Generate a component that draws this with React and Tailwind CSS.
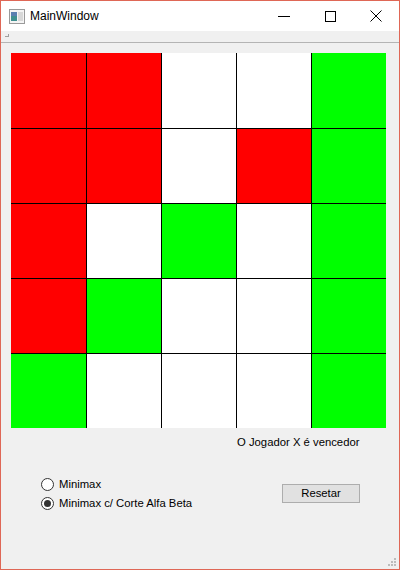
import React, { useState } from 'react';

const R = 'bg-[#ff0000]';
const G = 'bg-[#00ff00]';
const W = 'bg-white';

const board = [
    [R, R, W, W, G],
    [R, R, W, R, G],
    [R, W, G, W, G],
    [R, G, W, W, G],
    [G, W, W, W, G],
];

const Radio = ({ checked, label, onClick }) => (
    <div className="flex items-center h-[19px] cursor-default" onClick={onClick}>
        <span className="w-[13px] h-[13px] rounded-full border border-[#333333] bg-white flex items-center justify-center">
            {checked && <span className="w-[7px] h-[7px] rounded-full bg-[#333333]" />}
        </span>
        <span className="ml-[5px] text-[11.3px] text-black">{label}</span>
    </div>
);

const App = () => {
    const [mode, setMode] = useState(1);

    return (
        <div
            className="w-[400px] h-[570px] border border-[#df6756] bg-[#f0f0f0] flex flex-col relative overflow-hidden"
            style={{ fontFamily: '"Liberation Sans", Arial, sans-serif' }}
        >
            {/* title bar */}
            <div className="h-[30px] bg-white flex items-center shrink-0">
                <svg className="ml-[8px]" width="16" height="15" viewBox="0 0 16 15">
                    <rect x="0.5" y="0.5" width="15" height="14" fill="#f4f4f4" stroke="#9a9a9a" />
                    <rect x="2" y="3" width="6" height="9" fill="#3f8f8f" />
                    <rect x="2" y="3" width="6" height="4" fill="#5a7fb0" />
                    <rect x="9" y="3" width="5" height="9" fill="#d8d8d8" />
                </svg>
                <span className="ml-[5px] text-[12px] text-black">MainWindow</span>
                <div className="ml-auto flex items-center">
                    <div className="w-[46px] h-[30px] flex items-center justify-center">
                        <svg width="12" height="12" viewBox="0 0 12 12">
                            <line x1="0" y1="6.5" x2="12" y2="6.5" stroke="#000" strokeWidth="1" />
                        </svg>
                    </div>
                    <div className="w-[46px] h-[30px] flex items-center justify-center">
                        <svg width="11" height="11" viewBox="0 0 11 11">
                            <rect x="0.5" y="0.5" width="10" height="10" fill="none" stroke="#000" strokeWidth="1" />
                        </svg>
                    </div>
                    <div className="w-[46px] h-[30px] flex items-center justify-center">
                        <svg width="12" height="12" viewBox="0 0 12 12">
                            <path d="M0.5 0.5 L11.5 11.5 M11.5 0.5 L0.5 11.5" stroke="#000" strokeWidth="1" />
                        </svg>
                    </div>
                </div>
            </div>

            {/* menu strip */}
            <div className="h-[12px] shrink-0 border-b border-[#b4b4b4] flex items-start">
                <svg className="ml-[4px] mt-[3px]" width="4" height="3" viewBox="0 0 4 3">
                    <rect x="0" y="2" width="4" height="1" fill="#a0a0a0" />
                    <rect x="3" y="0" width="1" height="3" fill="#a0a0a0" />
                </svg>
            </div>

            {/* content */}
            <div className="pl-[10px] pt-[10px] flex flex-col">
                <div className="grid grid-cols-[75px_74px_74px_74px_74px] grid-rows-[75px_74px_74px_74px_74px] gap-px bg-black w-[375px] h-[375px]">
                    {board.flat().map((c, i) => (
                        <div key={i} className={c} />
                    ))}
                </div>

                <div className="ml-[226px] mt-[6px] h-[16px] text-[11.3px] leading-[16px] text-black">
                    O Jogador X é vencedor
                </div>

                <div className="flex items-start mt-[25px]">
                    <div className="ml-[30px] flex flex-col">
                        <Radio checked={mode === 0} label="Minimax" onClick={() => setMode(0)} />
                        <Radio checked={mode === 1} label="Minimax c/ Corte Alfa Beta" onClick={() => setMode(1)} />
                    </div>
                    <button className="ml-auto mr-[39px] mt-[9px] w-[78px] h-[19px] border border-[#adadad] bg-[#e1e1e1] text-[11.3px] leading-[17px] text-black">
                        Resetar
                    </button>
                </div>
            </div>

            {/* size grip */}
            <svg className="absolute right-[3px] bottom-[3px]" width="8" height="8" viewBox="0 0 8 8">
                <rect x="6" y="0" width="2" height="2" fill="#bcbcbc" />
                <rect x="3" y="3" width="2" height="2" fill="#bcbcbc" />
                <rect x="6" y="3" width="2" height="2" fill="#bcbcbc" />
                <rect x="0" y="6" width="2" height="2" fill="#bcbcbc" />
                <rect x="3" y="6" width="2" height="2" fill="#bcbcbc" />
                <rect x="6" y="6" width="2" height="2" fill="#bcbcbc" />
            </svg>
        </div>
    );
};

export default App;
